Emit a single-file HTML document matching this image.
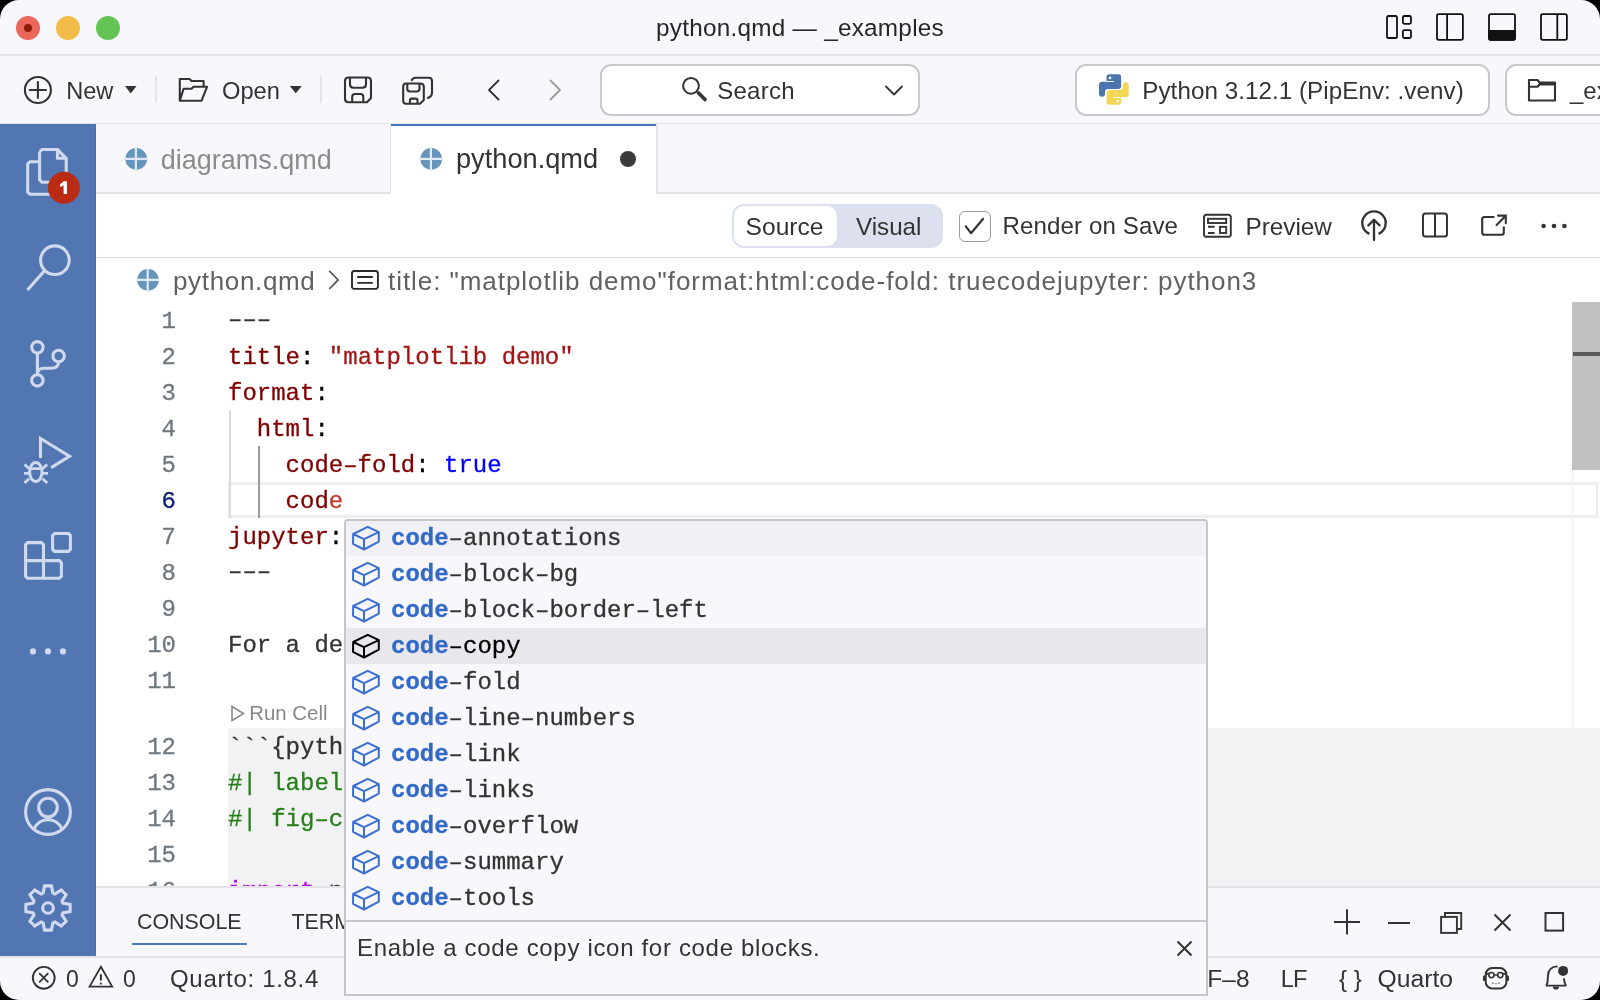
<!DOCTYPE html>
<html><head><meta charset="utf-8">
<style>
*{margin:0;padding:0;box-sizing:border-box}
html,body{width:1600px;height:1000px;overflow:hidden;background:#000}
#win{will-change:transform;position:absolute;left:0;top:0;width:1600px;height:1000px;border-radius:19px;overflow:hidden;background:#f8f8fc;font-family:"Liberation Sans",sans-serif;color:#333}
.a{position:absolute}
.t{position:absolute;line-height:0;white-space:pre;font-family:"Liberation Sans",sans-serif}
.m{position:absolute;line-height:0;white-space:pre;font-family:"Liberation Mono",monospace;font-size:24px;-webkit-text-stroke:0.3px}
.hl{position:absolute;background:#e3e3e8}
svg{position:absolute;overflow:visible}
</style></head><body><div id="win">

<!-- title bar -->
<div class="a" style="left:16px;top:16px;width:24px;height:24px;border-radius:50%;background:#e9685a"></div>
<div class="a" style="left:24px;top:24px;width:8px;height:8px;border-radius:50%;background:#8c1a07"></div>
<div class="a" style="left:56px;top:16px;width:24px;height:24px;border-radius:50%;background:#f1bd48"></div>
<div class="a" style="left:96px;top:16px;width:24px;height:24px;border-radius:50%;background:#63c554"></div>
<div class="t" style="left:656px;top:28.1px;font-size:24.3px;letter-spacing:0.26px;color:#262626">python.qmd — _examples</div>
<div class="hl" style="left:0;top:54px;width:1600px;height:1.5px"></div>


<!-- title icons -->
<svg style="left:0;top:0" width="1" height="1">
 <rect x="1387" y="16" width="10" height="22" rx="1.6" fill="none" stroke="#111" stroke-width="1.8" stroke-linejoin="round"/>
 <rect x="1402.9" y="16" width="8.1" height="7.8" rx="1.5" fill="none" stroke="#111" stroke-width="1.8" stroke-linejoin="round"/>
 <rect x="1402.9" y="30.1" width="8.1" height="7.9" rx="1.5" fill="none" stroke="#111" stroke-width="1.8" stroke-linejoin="round"/>
 <rect x="1437" y="14.1" width="25.9" height="25.8" rx="1.8" fill="none" stroke="#111" stroke-width="1.8" stroke-linejoin="round"/>
 <path d="M1447.1 14.1 V39.9" fill="none" stroke="#111" stroke-width="1.8" stroke-linejoin="round"/>
 <rect x="1489" y="14.1" width="26" height="25.8" rx="1.8" fill="none" stroke="#111" stroke-width="1.8" stroke-linejoin="round"/>
 <path d="M1489 31 H1515 V38.1 Q1515 39.9 1513.2 39.9 H1490.8 Q1489 39.9 1489 38.1 Z" fill="#111" stroke="#111" stroke-width="1.8"/>
 <rect x="1541" y="14.1" width="25.9" height="25.8" rx="1.8" fill="none" stroke="#111" stroke-width="1.8" stroke-linejoin="round"/>
 <path d="M1557.3 14.1 V39.9" fill="none" stroke="#111" stroke-width="1.8" stroke-linejoin="round"/>
</svg>

<!-- toolbar -->
<div class="t" style="left:66.2px;top:91.2px;font-size:23.6px;color:#333">New</div>
<div class="t" style="left:222px;top:90.5px;font-size:23.7px;color:#333">Open</div>
<div class="hl" style="left:155px;top:76px;width:2px;height:27px"></div>
<div class="hl" style="left:320px;top:76px;width:2px;height:27px"></div>
<div class="a" style="left:600px;top:64.2px;width:320px;height:51.6px;border:2px solid #c9c9cd;border-radius:11px;background:#fff"></div>
<div class="t" style="left:717.2px;top:90.7px;font-size:24px;letter-spacing:0.25px;color:#333">Search</div>
<div class="a" style="left:1074.5px;top:64.2px;width:415px;height:51.6px;border:2px solid #c9c9cd;border-radius:11px;background:#fff"></div>
<div class="t" style="left:1142.3px;top:90.9px;font-size:24.2px;letter-spacing:0.05px;color:#333">Python 3.12.1 (PipEnv: .venv)</div>
<div class="a" style="left:1504.5px;top:64.2px;width:200px;height:51.6px;border:2px solid #c9c9cd;border-radius:11px;background:#fff"></div>
<div class="t" style="left:1570px;top:90.7px;font-size:24px;color:#333">_examples</div>
<div class="hl" style="left:0;top:123px;width:1600px;height:1.5px"></div>


<!-- toolbar icons -->
<svg style="left:0;top:0" width="1" height="1">
 <circle cx="37.9" cy="90" r="13" fill="none" stroke="#333" stroke-width="2.1" stroke-linejoin="round" stroke-linecap="round"/>
 <path d="M29.8 90 H46 M37.9 82 V98" fill="none" stroke="#333" stroke-width="2.1" stroke-linejoin="round" stroke-linecap="round"/>
 <path d="M125 86 H136.5 L130.75 93.5 Z" fill="#333"/>
 <path d="M179.8 100.8 V79 H189.5 L191.5 81 H203.6 V86.5 M179.8 100.8 L183.6 88.8 H191.6 L193.5 86.8 H207 L201.5 100.8 Z" fill="none" stroke="#333" stroke-width="2.1" stroke-linejoin="round" stroke-linecap="round"/>
 <path d="M289.8 86 H301.8 L295.8 93.3 Z" fill="#333"/>
 <path d="M348.5 77.5 H367.5 Q371 77.5 371 81 V98 L367 102.2 H348.5 Q345 102.2 345 98.7 V81 Q345 77.5 348.5 77.5 Z M350 77.8 V84.3 Q350 87.8 353.5 87.8 H362.5 Q366 87.8 366 84.3 V77.8 M352.2 102 V96.8 Q352.2 94 355 94 H360.5 Q363.3 94 363.3 96.8 V102" fill="none" stroke="#333" stroke-width="2.1" stroke-linejoin="round" stroke-linecap="round"/>
 <path d="M406 83.5 H420.5 Q423.8 83.5 423.8 86.8 V100 L420 103.8 H406 Q403.2 103.8 403.2 100.5 V86.8 Q403.2 83.5 406 83.5 Z M407.3 83.8 V88.8 Q407.3 91.5 410 91.5 H416.8 Q419.5 91.5 419.5 88.8 V83.8 M410 103.6 V100.3 Q410 98.6 411.7 98.6 H415.8 Q417.5 98.6 417.5 100.3 V103.6" fill="none" stroke="#333" stroke-width="2.1" stroke-linejoin="round" stroke-linecap="round"/>
 <path d="M411.8 80.2 Q412.8 77.8 415.6 77.8 H428.8 Q432 77.8 432 81 V92.5 Q432 96.5 427.8 98" fill="none" stroke="#333" stroke-width="2.1" stroke-linejoin="round" stroke-linecap="round"/>
 <path d="M498.5 80.5 L489 90 L498.5 99.5" fill="none" stroke="#333" stroke-width="1.8" stroke-linecap="round" stroke-linejoin="round"/>
 <path d="M550.5 80.5 L560 90 L550.5 99.5" fill="none" stroke="#9c9c9c" stroke-width="1.8" stroke-linecap="round" stroke-linejoin="round"/>
 <circle cx="691" cy="85.8" r="7.9" fill="none" stroke="#333" stroke-width="2"/>
 <path d="M698.3 92.8 L705 99.5" stroke="#333" stroke-width="3.6" stroke-linecap="round"/>
 <path d="M886 86.5 L894 94.5 L902 86.5" fill="none" stroke="#333" stroke-width="1.8" stroke-linecap="round" stroke-linejoin="round"/>
 <g transform="translate(1094 70)">
  <path d="M15.5 4.2 H24.2 Q27.2 4.2 27.2 7.2 V16 Q27.2 19 24.2 19 H14 Q11 19 11 22 V23.8 Q11 26.8 8 26.8 Q5 26.8 5 23.8 V14.8 Q5 11.8 8 11.8 H12.5 V7.2 Q12.5 4.2 15.5 4.2 Z" fill="#4a76ad"/>
  <path d="M15.5 4.2 H24.2 Q27.2 4.2 27.2 7.2 V16 Q27.2 19 24.2 19 H14 Q11 19 11 22 V23.8 Q11 26.8 8 26.8 Q5 26.8 5 23.8 V14.8 Q5 11.8 8 11.8 H12.5 V7.2 Q12.5 4.2 15.5 4.2 Z" fill="#f4d657" transform="rotate(180 19.9 19.5)"/>
  <rect x="12.4" y="11" width="7.6" height="0.9" fill="#fff"/>
  <rect x="19.8" y="27.1" width="7.6" height="0.9" fill="#fff"/>
  <circle cx="16" cy="7.9" r="1.3" fill="#fff"/>
  <circle cx="23.8" cy="31.1" r="1.3" fill="#fff"/>
 </g>
 <path d="M1529 100.5 V80 H1537.5 L1539.5 82.5 H1555 V100.5 Z M1529 86.8 H1537.5 L1539.5 84.5 H1555" fill="none" stroke="#333" stroke-width="2.1" stroke-linejoin="round" stroke-linecap="round"/>
</svg>

<!-- activity bar -->
<div class="a" style="left:0;top:124px;width:96px;height:832px;background:#5176b2;border-right:1px solid #4670ad"></div>
<!-- activity icons -->
<svg style="left:0;top:0" width="1" height="1">
 <path d="M39.6 152 L42 149.5 H57.5 L66.2 158.3 V185 M39.6 152 V179.8 L42 182.3 H60 M57.5 149.5 V158.3 H66.2" fill="none" stroke="#d0d9ee" stroke-width="3.1" stroke-linejoin="miter" stroke-linecap="butt"/>
 <path d="M39.6 161.7 H30 L27.7 164 V192 L30 194.3 H60" fill="none" stroke="#d0d9ee" stroke-width="3.1" stroke-linejoin="miter" stroke-linecap="butt"/>
 <circle cx="63.9" cy="187.8" r="16" fill="#b92b13"/>
 <path d="M63.6 181.2 H67 V194.1 H63.6 V185.2 Q62 186.4 60.1 187 V183.9 Q62.6 183 63.6 181.2 Z" fill="#fff"/>
 <circle cx="54.9" cy="260.2" r="14.3" fill="none" stroke="#d0d9ee" stroke-width="3.1" stroke-linejoin="miter" stroke-linecap="butt"/>
 <path d="M44.8 270.4 L27.5 290" fill="none" stroke="#d0d9ee" stroke-width="3.1" stroke-linejoin="miter" stroke-linecap="butt"/>
 <circle cx="37.4" cy="347.3" r="5.7" fill="none" stroke="#d0d9ee" stroke-width="3.1" stroke-linejoin="miter" stroke-linecap="butt"/>
 <circle cx="58.6" cy="356" r="5.7" fill="none" stroke="#d0d9ee" stroke-width="3.1" stroke-linejoin="miter" stroke-linecap="butt"/>
 <circle cx="37.4" cy="380.4" r="5.7" fill="none" stroke="#d0d9ee" stroke-width="3.1" stroke-linejoin="miter" stroke-linecap="butt"/>
 <path d="M37.4 353 V374.7 M58.6 361.7 Q58.6 368.2 51 368.2 H44 Q37.4 368.2 37.4 374" fill="none" stroke="#d0d9ee" stroke-width="3.1" stroke-linejoin="miter" stroke-linecap="butt"/>
 <path d="M40.5 458 V438.5 L69.5 456.2 L51.2 467.6" fill="none" stroke="#d0d9ee" stroke-width="3.1" stroke-linejoin="miter" stroke-linecap="butt"/>
 <ellipse cx="35.8" cy="472" rx="6.2" ry="9.6" fill="none" stroke="#d0d9ee" stroke-width="3"/>
 <path d="M29.6 468.6 H42 M24 473.4 H29 M42.5 473.4 H48 M24.5 464.5 L29 468.5 M47.2 464.5 L42.6 468.5 M24.5 483 L29 478.8 M47.2 483 L42.6 478.8" fill="none" stroke="#d0d9ee" stroke-width="2.9"/>
 <path d="M25.6 544.6 L27.6 542.6 H41.5 L43.5 544.6 V560.6 H59.4 L61.4 562.6 V576.3 L59.4 578.3 H27.6 L25.6 576.3 Z M25.6 560.6 H43.5 V578.3" fill="none" stroke="#d0d9ee" stroke-width="3.1" stroke-linejoin="miter" stroke-linecap="butt"/>
 <path d="M52.6 535.5 L54.6 533.5 H68.4 L70.4 535.5 V549.4 L68.4 551.4 H54.6 L52.6 549.4 Z" fill="none" stroke="#d0d9ee" stroke-width="3.1" stroke-linejoin="miter" stroke-linecap="butt"/>
 <circle cx="33" cy="651.4" r="3.1" fill="#d0d9ee"/>
 <circle cx="48" cy="651.4" r="3.1" fill="#d0d9ee"/>
 <circle cx="63" cy="651.4" r="3.1" fill="#d0d9ee"/>
 <circle cx="48" cy="812" r="22.4" fill="none" stroke="#d0d9ee" stroke-width="3.1" stroke-linejoin="miter" stroke-linecap="butt"/>
 <circle cx="48" cy="807.5" r="9.3" fill="none" stroke="#d0d9ee" stroke-width="3.1" stroke-linejoin="miter" stroke-linecap="butt"/>
 <path d="M34.3 828.5 A15 15 0 0 1 61.7 828.5" fill="none" stroke="#d0d9ee" stroke-width="3.1" stroke-linejoin="miter" stroke-linecap="butt"/>
 <path d="M43.05 893.21 L44.57 885.86 L51.43 885.86 L52.95 893.21 L54.96 894.04 L61.23 889.92 L66.08 894.77 L61.96 901.04 L62.79 903.05 L70.14 904.57 L70.14 911.43 L62.79 912.95 L61.96 914.96 L66.08 921.23 L61.23 926.08 L54.96 921.96 L52.95 922.79 L51.43 930.14 L44.57 930.14 L43.05 922.79 L41.04 921.96 L34.77 926.08 L29.92 921.23 L34.04 914.96 L33.21 912.95 L25.86 911.43 L25.86 904.57 L33.21 903.05 L34.04 901.04 L29.92 894.77 L34.77 889.92 L41.04 894.04 Z" fill="none" stroke="#d0d9ee" stroke-width="3.1" stroke-linejoin="miter" stroke-linecap="butt"/>
 <circle cx="48" cy="908" r="5.3" fill="none" stroke="#d0d9ee" stroke-width="3.1" stroke-linejoin="miter" stroke-linecap="butt"/>
</svg>



<!-- tabs -->
<div class="a" style="left:96px;top:124px;width:1504px;height:68px;background:#f8f8fc"></div>
<div class="hl" style="left:96px;top:192px;width:1504px;height:2px"></div>
<div class="hl" style="left:389.5px;top:124px;width:1.5px;height:68px"></div>
<div class="a" style="left:391px;top:124px;width:265px;height:70px;background:#fff;border-top:2px solid #4a74b8"></div>
<div class="hl" style="left:656px;top:124px;width:1.5px;height:68px"></div>
<div class="t" style="left:160.7px;top:159.6px;font-size:27px;color:#8b8b8b">diagrams.qmd</div>
<div class="t" style="left:456px;top:159.2px;font-size:27.2px;color:#333">python.qmd</div>
<div class="a" style="left:620px;top:151px;width:16px;height:16px;border-radius:50%;background:#3b3b3b"></div>

<!-- editor area -->
<div class="a" style="left:96px;top:193.5px;width:1504px;height:692.5px;background:#fff"></div>
<div class="a" style="left:732px;top:204px;width:211px;height:44px;border-radius:12px;background:#dde0ef"></div>
<div class="a" style="left:734px;top:206px;width:102.5px;height:40px;border-radius:10px;background:#fff"></div>
<div class="t" style="left:745.6px;top:226.5px;font-size:24.6px;color:#333">Source</div>
<div class="t" style="left:856px;top:226.6px;font-size:24.2px;color:#333">Visual</div>
<div class="a" style="left:959px;top:210.5px;width:31.5px;height:31px;border:1.7px solid #9b9ba0;border-radius:6px;background:#fff"></div>
<div class="t" style="left:1002.6px;top:225.6px;font-size:24.1px;letter-spacing:0.1px;color:#333">Render on Save</div>
<div class="t" style="left:1245.5px;top:227px;font-size:24.3px;color:#333">Preview</div>
<div class="hl" style="left:96px;top:256.8px;width:1504px;height:1.3px;background:#dedde6"></div>


<!-- code editor -->
<div class="a" style="left:0;top:0;width:1600px;height:886px;overflow:hidden">
<div class="a" style="left:228px;top:728px;width:1372px;height:200px;background:#f2f2f4"></div>
<div class="a" style="left:228px;top:482px;width:1370px;height:36px;border:3px solid #eeeef2;border-right-width:2px"></div>
<div class="a" style="left:228.5px;top:410px;width:2px;height:108px;background:#dcdce0"></div>
<div class="a" style="left:257.5px;top:446px;width:2px;height:72px;background:#9a9a9e"></div>
<div class="a" style="left:1572px;top:302px;width:1px;height:584px;background:#f0f0f2"></div>
<div class="a" style="left:1572px;top:302px;width:28px;height:167.5px;background:#c1c1c1"></div>
<div class="a" style="left:1573px;top:352px;width:27px;height:4px;background:#5a5a5a"></div>
<svg style="left:0;top:0" width="1" height="1"><path d="M232 706.5 L243.5 713.5 L232 720.5 Z" fill="none" stroke="#8a8a8a" stroke-width="1.6" stroke-linejoin="miter"/></svg>
<div class="t" style="left:249.3px;top:712.9px;font-size:20.4px;color:#888">Run Cell</div>
<div class="m" style="left:96px;width:80px;text-align:right;top:321.5px;color:#6e7781">1</div>
<div class="m" style="left:228px;top:319.5px"><span style="color:#333">–––</span></div>
<div class="m" style="left:96px;width:80px;text-align:right;top:357.5px;color:#6e7781">2</div>
<div class="m" style="left:228px;top:357.5px"><span style="color:#800000">title</span><span style="color:#000">:</span> <span style="color:#a31515">"matplotlib demo"</span></div>
<div class="m" style="left:96px;width:80px;text-align:right;top:393.5px;color:#6e7781">3</div>
<div class="m" style="left:228px;top:393.5px"><span style="color:#800000">format</span><span style="color:#000">:</span></div>
<div class="m" style="left:96px;width:80px;text-align:right;top:429.5px;color:#6e7781">4</div>
<div class="m" style="left:228px;top:429.5px"><span style="color:#800000">  html</span><span style="color:#000">:</span></div>
<div class="m" style="left:96px;width:80px;text-align:right;top:465.5px;color:#6e7781">5</div>
<div class="m" style="left:228px;top:465.5px"><span style="color:#800000">    code–fold</span><span style="color:#000">:</span> <span style="color:#0000ff">true</span></div>
<div class="m" style="left:96px;width:80px;text-align:right;top:501.5px;color:#0b216f">6</div>
<div class="m" style="left:228px;top:501.5px"><span style="color:#800000">    cod</span><span style="color:#c0392b">e</span></div>
<div class="m" style="left:96px;width:80px;text-align:right;top:537.5px;color:#6e7781">7</div>
<div class="m" style="left:228px;top:537.5px"><span style="color:#800000">jupyter</span><span style="color:#000">:</span><span style="color:#800000"> python3</span></div>
<div class="m" style="left:96px;width:80px;text-align:right;top:573.5px;color:#6e7781">8</div>
<div class="m" style="left:228px;top:571.5px"><span style="color:#333">–––</span></div>
<div class="m" style="left:96px;width:80px;text-align:right;top:609.5px;color:#6e7781">9</div>
<div class="m" style="left:96px;width:80px;text-align:right;top:645.5px;color:#6e7781">10</div>
<div class="m" style="left:228px;top:645.5px"><span style="color:#333">For a demonstration of a line plot on a polar axis, see @fig–polar.</span></div>
<div class="m" style="left:96px;width:80px;text-align:right;top:681.5px;color:#6e7781">11</div>
<div class="m" style="left:96px;width:80px;text-align:right;top:747.5px;color:#6e7781">12</div>
<div class="m" style="left:228px;top:747.5px"><span style="color:#333">```{python}</span></div>
<div class="m" style="left:96px;width:80px;text-align:right;top:783.5px;color:#6e7781">13</div>
<div class="m" style="left:228px;top:783.5px"><span style="color:#267f19">#| label: fig–polar</span></div>
<div class="m" style="left:96px;width:80px;text-align:right;top:819.5px;color:#6e7781">14</div>
<div class="m" style="left:228px;top:819.5px"><span style="color:#267f19">#| fig–cap: "A line plot on a polar axis"</span></div>
<div class="m" style="left:96px;width:80px;text-align:right;top:855.5px;color:#6e7781">15</div>
<div class="m" style="left:96px;width:80px;text-align:right;top:891.5px;color:#6e7781">16</div>
<div class="m" style="left:228px;top:891.5px"><span style="color:#af00db">import</span><span style="color:#333"> numpy </span><span style="color:#af00db">as</span><span style="color:#333"> np</span></div>
</div>

<!-- breadcrumbs -->
<div class="t" style="left:173px;top:280.75px;font-size:26px;letter-spacing:0.66px;color:#616161">python.qmd</div>
<div class="t" style="left:388px;top:280.75px;font-size:26px;letter-spacing:0.95px;color:#616161">title: "matplotlib demo"format:html:code-fold: truecodejupyter: python3</div>

<!-- quarto icons -->
<svg style="left:0;top:0" width="1" height="1">
 <g id="q1"><circle cx="136.2" cy="158.9" r="10.8" fill="#6595bb"/><path d="M135.9 147 V171 M124 158.9 H148" stroke="#dfe8f0" stroke-width="2.2"/></g>
 <circle cx="431.2" cy="158.9" r="10.8" fill="#6595bb"/><path d="M430.9 147 V171 M419 158.9 H443" stroke="#e4ecf3" stroke-width="2.2"/>
 <circle cx="148" cy="279.8" r="10.8" fill="#6595bb"/><path d="M147.7 268 V292 M136 279.8 H160" stroke="#e4ecf3" stroke-width="2.2"/>
</svg>

<!-- editor toolbar icons -->
<svg style="left:0;top:0" width="1" height="1">
 <path d="M965.8 226.4 L971 233.2 L983.2 218.8" fill="none" stroke="#333" stroke-width="2.2" stroke-linecap="round" stroke-linejoin="round"/>
 <path d="M1205.5 214.8 H1229.3 L1230.8 216.3 V235.3 L1229.3 236.8 H1205.5 L1204 235.3 V216.3 Z" fill="none" stroke="#333" stroke-width="1.9"/>
 <rect x="1208" y="218.8" width="18.2" height="4.2" fill="none" stroke="#333" stroke-width="1.9"/>
 <path d="M1208 226.8 H1214.6 M1208 233 H1214.6" stroke="#333" stroke-width="1.9"/>
 <rect x="1220" y="226.8" width="6.2" height="6.2" fill="none" stroke="#333" stroke-width="1.9"/>
 <path d="M1369.4 233.8 A11.7 11.7 0 1 1 1378.6 233.8" fill="none" stroke="#333" stroke-width="2.4"/>
 <path d="M1374 240 V220.5 M1368.4 225.4 L1374 219.8 L1379.6 225.4" fill="none" stroke="#333" stroke-width="2.3" stroke-linecap="round" stroke-linejoin="round"/>
 <rect x="1423" y="213.5" width="24" height="23" rx="2.5" fill="none" stroke="#333" stroke-width="2"/>
 <path d="M1435 213.5 V236.5" stroke="#333" stroke-width="2"/>
 <path d="M1494.4 217 H1484.5 Q1482.2 217 1482.2 219.3 V232.5 Q1482.2 234.8 1484.5 234.8 H1501.5 Q1503.8 234.8 1503.8 232.5 V226.4" fill="none" stroke="#333" stroke-width="2.1"/>
 <path d="M1496.6 225 L1505.5 216 M1498 215.6 H1505.8 V223.2" fill="none" stroke="#333" stroke-width="2.1" stroke-linecap="round"/>
 <circle cx="1543.6" cy="226" r="2.3" fill="#333"/>
 <circle cx="1554" cy="226" r="2.3" fill="#333"/>
 <circle cx="1564.4" cy="226" r="2.3" fill="#333"/>
 <path d="M329.3 270.8 L338.1 279.9 L329.3 289" fill="none" stroke="#555" stroke-width="1.7"/>
 <path d="M353.5 271 H376.4 L377.9 272.5 V287.4 L376.4 288.9 H353.5 L352 287.4 V272.5 Z" fill="none" stroke="#2a2a2a" stroke-width="1.9"/>
 <path d="M357.2 277 H372.8 M357.2 282.9 H372.8" stroke="#2a2a2a" stroke-width="1.9"/>
</svg>

<!-- panel -->
<div class="hl" style="left:96px;top:886px;width:1504px;height:1.5px"></div>
<div class="a" style="left:96px;top:887.5px;width:1504px;height:68.5px;background:#f8f8fc"></div>
<div class="t" style="left:137px;top:922.3px;font-size:21.4px;color:#333">CONSOLE</div>
<div class="a" style="left:132px;top:942.5px;width:115px;height:2.5px;background:#4a78c2"></div>
<div class="t" style="left:291.5px;top:922.3px;font-size:21.4px;color:#333">TERMINAL</div>

<!-- status bar -->
<div class="hl" style="left:0;top:956px;width:1600px;height:1.5px"></div>
<div class="t" style="left:66px;top:979px;font-size:23px;color:#333">0</div>
<div class="t" style="left:123px;top:979px;font-size:23px;color:#333">0</div>
<div class="t" style="left:170px;top:978.5px;font-size:24px;letter-spacing:0.68px;color:#333">Quarto: 1.8.4</div>
<div class="t" style="left:1207.3px;top:978.5px;font-size:24.5px;color:#333">F–8</div>
<div class="t" style="left:1280.8px;top:978.5px;font-size:23.6px;letter-spacing:-0.9px;color:#333">LF</div>
<div class="t" style="left:1377.5px;top:978.5px;font-size:24.7px;color:#333">Quarto</div>



<!-- panel & status icons -->
<svg style="left:0;top:0" width="1" height="1">
 <path d="M1334 922 H1360 M1347 909.3 V934.6" stroke="#333" stroke-width="2"/>
 <path d="M1388 923 H1410" stroke="#333" stroke-width="2"/>
 <rect x="1441.1" y="916.9" width="15.8" height="16" fill="none" stroke="#333" stroke-width="1.9"/>
 <path d="M1445 916.9 V913 H1461.2 V929 H1456.9" fill="none" stroke="#333" stroke-width="1.9"/>
 <path d="M1494.5 914.5 L1510.5 930.5 M1510.5 914.5 L1494.5 930.5" stroke="#333" stroke-width="2"/>
 <rect x="1545.5" y="913" width="17.6" height="17.6" fill="none" stroke="#333" stroke-width="2"/>
 <circle cx="43.75" cy="977.8" r="10.9" fill="none" stroke="#333" stroke-width="1.9"/>
 <path d="M39.2 973.2 L48.3 982.3 M48.3 973.2 L39.2 982.3" stroke="#333" stroke-width="1.8"/>
 <path d="M100.9 966.8 L112.2 986.6 H89.6 Z" fill="none" stroke="#333" stroke-width="1.8" stroke-linejoin="miter"/>
 <path d="M100.9 974.3 V980.5" stroke="#333" stroke-width="2"/>
 <circle cx="100.9" cy="983.6" r="1.1" fill="#333"/>
 <rect x="1485.7" y="968.1" width="20.7" height="20.3" rx="6.5" fill="none" stroke="#333" stroke-width="2"/>
 <path d="M1486 975 Q1488 972.5 1489.2 974.4 M1502.6 974.4 Q1504 972.5 1506 975 M1494.2 975 H1497.6" fill="none" stroke="#333" stroke-width="1.6"/>
 <circle cx="1491.5" cy="975.1" r="2.6" fill="#f8f8fc" stroke="#333" stroke-width="1.6"/>
 <circle cx="1500.3" cy="975.1" r="2.6" fill="#f8f8fc" stroke="#333" stroke-width="1.6"/>
 <rect x="1483" y="975.5" width="2.4" height="5.5" rx="1.2" fill="#333"/>
 <rect x="1506.6" y="975.5" width="2.4" height="5.5" rx="1.2" fill="#333"/>
 <path d="M1492.5 983.2 H1493.5 M1495.5 983.6 H1496.5 M1498.5 983.2 H1499.5" stroke="#333" stroke-width="1.4"/>
 <path d="M1557.7 966.4 Q1548.2 966.6 1548 976 Q1548 982 1546.5 985.6 H1565.8 Q1564.2 982 1563.9 978.4" fill="none" stroke="#333" stroke-width="1.9" stroke-linejoin="round"/>
 <path d="M1552.8 986.5 A3.1 3.1 0 0 0 1559 986.5 Z" fill="#333"/>
 <circle cx="1563.1" cy="970.9" r="5" fill="#333"/>
</svg>
<div class="t" style="left:1339px;top:978.5px;font-size:24px;color:#333">{ }</div>

<!-- suggest widget -->
<div class="a" style="left:344px;top:518.5px;width:864px;height:477.5px;border:2px solid #c6c5cb;border-radius:4px 4px 0 0;background:#f8f8fc"></div>
<div class="a" style="left:346px;top:520.5px;width:860px;height:35.5px;background:#f1f1f5"></div>
<svg style="left:346px;top:520px" width="40" height="36"><path d="M7.2 14 L21.8 6.8 L32.8 12.2 L18 19.1 Z M7.2 14 L7 23.8 L18 29.5 L32.8 21.6 L32.8 12.2 M18 19.1 L18 29.5" fill="none" stroke="#3a70cc" stroke-width="2" stroke-linejoin="round" stroke-linecap="round"/></svg>
<div class="m" style="left:391px;top:539.1px;color:#333"><span style="color:#3169c6;font-weight:bold">code</span>–annotations</div>
<svg style="left:346px;top:556px" width="40" height="36"><path d="M7.2 14 L21.8 6.8 L32.8 12.2 L18 19.1 Z M7.2 14 L7 23.8 L18 29.5 L32.8 21.6 L32.8 12.2 M18 19.1 L18 29.5" fill="none" stroke="#3a70cc" stroke-width="2" stroke-linejoin="round" stroke-linecap="round"/></svg>
<div class="m" style="left:391px;top:575.1px;color:#333"><span style="color:#3169c6;font-weight:bold">code</span>–block–bg</div>
<svg style="left:346px;top:592px" width="40" height="36"><path d="M7.2 14 L21.8 6.8 L32.8 12.2 L18 19.1 Z M7.2 14 L7 23.8 L18 29.5 L32.8 21.6 L32.8 12.2 M18 19.1 L18 29.5" fill="none" stroke="#3a70cc" stroke-width="2" stroke-linejoin="round" stroke-linecap="round"/></svg>
<div class="m" style="left:391px;top:611.1px;color:#333"><span style="color:#3169c6;font-weight:bold">code</span>–block–border–left</div>
<div class="a" style="left:346px;top:628px;width:860px;height:36px;background:#e7e7ec"></div>
<svg style="left:346px;top:628px" width="40" height="36"><path d="M7.2 14 L21.8 6.8 L32.8 12.2 L18 19.1 Z M7.2 14 L7 23.8 L18 29.5 L32.8 21.6 L32.8 12.2 M18 19.1 L18 29.5" fill="none" stroke="#000" stroke-width="2" stroke-linejoin="round" stroke-linecap="round"/></svg>
<div class="m" style="left:391px;top:647.1px;color:#000"><span style="color:#3169c6;font-weight:bold">code</span>–copy</div>
<svg style="left:346px;top:664px" width="40" height="36"><path d="M7.2 14 L21.8 6.8 L32.8 12.2 L18 19.1 Z M7.2 14 L7 23.8 L18 29.5 L32.8 21.6 L32.8 12.2 M18 19.1 L18 29.5" fill="none" stroke="#3a70cc" stroke-width="2" stroke-linejoin="round" stroke-linecap="round"/></svg>
<div class="m" style="left:391px;top:683.1px;color:#333"><span style="color:#3169c6;font-weight:bold">code</span>–fold</div>
<svg style="left:346px;top:700px" width="40" height="36"><path d="M7.2 14 L21.8 6.8 L32.8 12.2 L18 19.1 Z M7.2 14 L7 23.8 L18 29.5 L32.8 21.6 L32.8 12.2 M18 19.1 L18 29.5" fill="none" stroke="#3a70cc" stroke-width="2" stroke-linejoin="round" stroke-linecap="round"/></svg>
<div class="m" style="left:391px;top:719.1px;color:#333"><span style="color:#3169c6;font-weight:bold">code</span>–line–numbers</div>
<svg style="left:346px;top:736px" width="40" height="36"><path d="M7.2 14 L21.8 6.8 L32.8 12.2 L18 19.1 Z M7.2 14 L7 23.8 L18 29.5 L32.8 21.6 L32.8 12.2 M18 19.1 L18 29.5" fill="none" stroke="#3a70cc" stroke-width="2" stroke-linejoin="round" stroke-linecap="round"/></svg>
<div class="m" style="left:391px;top:755.1px;color:#333"><span style="color:#3169c6;font-weight:bold">code</span>–link</div>
<svg style="left:346px;top:772px" width="40" height="36"><path d="M7.2 14 L21.8 6.8 L32.8 12.2 L18 19.1 Z M7.2 14 L7 23.8 L18 29.5 L32.8 21.6 L32.8 12.2 M18 19.1 L18 29.5" fill="none" stroke="#3a70cc" stroke-width="2" stroke-linejoin="round" stroke-linecap="round"/></svg>
<div class="m" style="left:391px;top:791.1px;color:#333"><span style="color:#3169c6;font-weight:bold">code</span>–links</div>
<svg style="left:346px;top:808px" width="40" height="36"><path d="M7.2 14 L21.8 6.8 L32.8 12.2 L18 19.1 Z M7.2 14 L7 23.8 L18 29.5 L32.8 21.6 L32.8 12.2 M18 19.1 L18 29.5" fill="none" stroke="#3a70cc" stroke-width="2" stroke-linejoin="round" stroke-linecap="round"/></svg>
<div class="m" style="left:391px;top:827.1px;color:#333"><span style="color:#3169c6;font-weight:bold">code</span>–overflow</div>
<svg style="left:346px;top:844px" width="40" height="36"><path d="M7.2 14 L21.8 6.8 L32.8 12.2 L18 19.1 Z M7.2 14 L7 23.8 L18 29.5 L32.8 21.6 L32.8 12.2 M18 19.1 L18 29.5" fill="none" stroke="#3a70cc" stroke-width="2" stroke-linejoin="round" stroke-linecap="round"/></svg>
<div class="m" style="left:391px;top:863.1px;color:#333"><span style="color:#3169c6;font-weight:bold">code</span>–summary</div>
<svg style="left:346px;top:880px" width="40" height="36"><path d="M7.2 14 L21.8 6.8 L32.8 12.2 L18 19.1 Z M7.2 14 L7 23.8 L18 29.5 L32.8 21.6 L32.8 12.2 M18 19.1 L18 29.5" fill="none" stroke="#3a70cc" stroke-width="2" stroke-linejoin="round" stroke-linecap="round"/></svg>
<div class="m" style="left:391px;top:899.1px;color:#333"><span style="color:#3169c6;font-weight:bold">code</span>–tools</div>
<div class="a" style="left:346px;top:920px;width:860px;height:2px;background:#c6c5cb"></div>
<div class="t" style="left:357px;top:948.4px;font-size:24px;letter-spacing:0.68px;color:#333">Enable a code copy icon for code blocks.</div>
<svg style="left:0;top:0" width="1" height="1"><path d="M1177.5 941.5 L1191.5 955.5 M1191.5 941.5 L1177.5 955.5" stroke="#333" stroke-width="2" fill="none"/></svg>

</div></body></html>
